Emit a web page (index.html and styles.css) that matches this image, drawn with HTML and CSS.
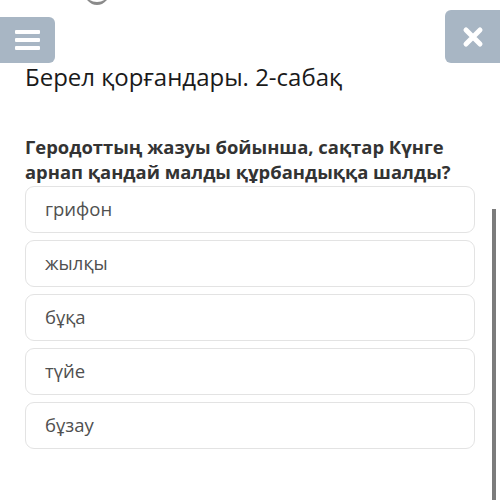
FILE: index.html
```html
<!DOCTYPE html>
<html lang="kk">
<head>
    <meta charset="UTF-8">
    <meta name="viewport" content="width=device-width, initial-scale=1.0">
    <title>Берел қорғандары</title>
    <link rel="stylesheet" href="styles.css">
</head>
<body>
    <!-- top bar -->
    <div class="topbar">
        <button class="btn-menu" type="button" aria-label="Menu">
            <span></span><span></span><span></span>
        </button>
        <button class="btn-close" type="button" aria-label="Close">
            <svg width="22" height="22" viewBox="0 0 22 22">
                <path d="M4 4 L18 18 M18 4 L4 18" stroke="#ffffff" stroke-width="5" stroke-linecap="round"/>
            </svg>
        </button>
    </div>
    <div class="top-arc"></div>

    <h1 class="lesson-title">Берел қорғандары. 2-сабақ</h1>

    <div class="question">Геродоттың жазуы бойынша, сақтар Күнге арнап қандай малды құрбандыққа шалды?</div>

    <div class="answers">
        <div class="answer">грифон</div>
        <div class="answer">жылқы</div>
        <div class="answer">бұқа</div>
        <div class="answer">түйе</div>
        <div class="answer">бұзау</div>
    </div>

    <div class="scrollbar"></div>
</body>
</html>
```

FILE: styles.css
```css
body {
    font-family: "Open Sans", "Noto Sans", sans-serif;
    margin: 0;
    padding: 0;
    background: #ffffff;
    position: relative;
    height: 500px;
    overflow: hidden;
}
.topbar {
    display: flex;
    justify-content: space-between;
    align-items: flex-start;
    height: 62px;
}
.btn-menu {
    margin-top: 17px;
    width: 55px;
    height: 46px;
    border: none;
    border-radius: 0 6px 6px 0;
    background-color: #a8b6c4;
    display: flex;
    flex-direction: column;
    justify-content: center;
    gap: 4px;
    padding: 0 15px;
}
.btn-menu span {
    display: block;
    width: 25px;
    height: 4px;
    background: #ffffff;
    border-radius: 1px;
}
.btn-close {
    margin-top: 10px;
    width: 55px;
    height: 53px;
    border: none;
    border-radius: 6px 0 0 6px;
    background-color: #a8b6c4;
    display: flex;
    align-items: center;
    justify-content: center;
    padding: 0;
}
.top-arc {
    position: absolute;
    left: 84px;
    top: -24px;
    width: 26px;
    height: 26px;
    border-radius: 50%;
    border-bottom: 3px solid #8a8a8a;
}
.lesson-title {
    font-size: 24px;
    font-weight: 400;
    line-height: 30px;
    color: #1a1a1a;
    margin: 0 0 0 25px;
}
.question {
    margin: 42px 30px 0 25px;
    font-size: 18.4px;
    font-weight: 700;
    line-height: 25px;
    color: #333333;
}
.answers {
    margin: 2px 25px 0 25px;
    display: flex;
    flex-direction: column;
    gap: 7px;
}
.answer {
    height: 45px;
    line-height: 43px;
    border: 1px solid #e3e3e3;
    border-radius: 9px;
    padding: 0 19px;
    font-size: 18.5px;
    color: #505050;
}
.scrollbar {
    position: absolute;
    left: 492px;
    top: 209px;
    width: 4px;
    height: 291px;
    background: #7c7c7c;
}
```
